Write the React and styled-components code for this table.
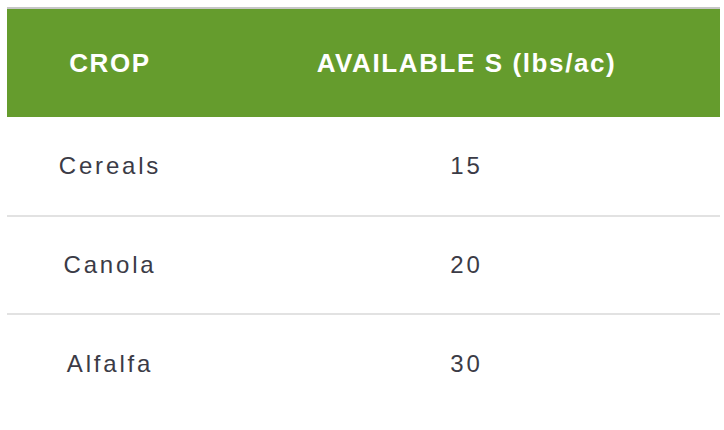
import React from 'react';
import styled, { createGlobalStyle } from 'styled-components';

const GlobalStyle = createGlobalStyle`
  html, body {
    margin: 0;
    padding: 0;
    background: #ffffff;
  }
  body {
    padding: 7px 4px 0 7px;
    font-family: "Liberation Sans", Arial, sans-serif;
  }
`;

const Table = styled.table`
  width: 100%;
  border-collapse: collapse;
  border-top: 2px solid #c6c6c6;
  table-layout: fixed;
`;

const HeadRow = styled.tr`
  background: #659c2d;
  height: 109px;
`;

const HeadCell = styled.th`
  width: ${p => p.width || 'auto'};
  padding: 0;
  color: #ffffff;
  font-size: 26px;
  font-weight: 700;
  letter-spacing: 1.6px;
  text-align: center;
  vertical-align: middle;
`;

const Row = styled.tr`
  height: 98.5px;
  border-bottom: ${p => (p.last ? 'none' : '2px solid #e2e2e2')};
`;

const Cell = styled.td`
  padding: 0;
  color: #3b3b46;
  font-size: 24px;
  letter-spacing: 2.8px;
  text-align: center;
  vertical-align: middle;
`;

const crops = [
  { name: 'Cereals', value: 15 },
  { name: 'Canola', value: 20 },
  { name: 'Alfalfa', value: 30 },
];

const App = () => (
  <>
    <GlobalStyle />
    <Table>
      <thead>
        <HeadRow>
          <HeadCell width="206px">CROP</HeadCell>
          <HeadCell>AVAILABLE S (lbs/ac)</HeadCell>
        </HeadRow>
      </thead>
      <tbody>
        {crops.map((crop, i) => (
          <Row key={crop.name} last={i === crops.length - 1}>
            <Cell>{crop.name}</Cell>
            <Cell>{crop.value}</Cell>
          </Row>
        ))}
      </tbody>
    </Table>
  </>
);

export default App;
